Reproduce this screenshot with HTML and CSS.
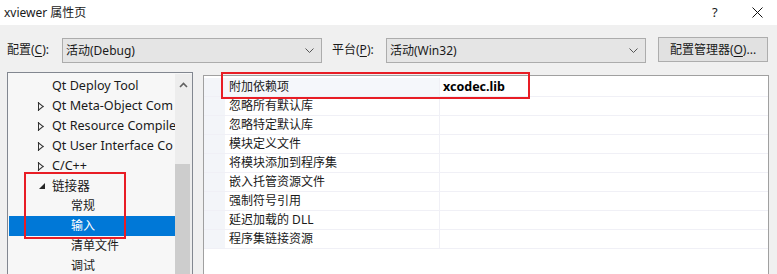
FILE: index.html
```html
<!DOCTYPE html>
<html lang="zh-CN">
<head>
	<meta charset="UTF-8">
	<title>xviewer 属性页</title>
	<link rel="stylesheet" href="styles.css">
</head>
<body>
	<div class="dialog">
		<div class="title-bar">
			<span class="title">xviewer 属性页</span>
			<span class="help">?</span>
			<span class="close">
				<svg width="11" height="11" viewBox="0 0 11 11"><path d="M0.5 0.5 L10.5 10.5 M10.5 0.5 L0.5 10.5" stroke="#111" stroke-width="1" fill="none"/></svg>
			</span>
		</div>

		<div class="toolbar">
			<label class="field-label">配置(<u>C</u>):</label>
			<div class="combo">
				<span>活动(Debug)</span>
				<svg class="chevron" width="9" height="5" viewBox="0 0 9 5"><path d="M0.5 0.5 L4.5 4.5 L8.5 0.5" stroke="#555" fill="none"/></svg>
			</div>
			<label class="field-label platform">平台(<u>P</u>):</label>
			<div class="combo">
				<span>活动(Win32)</span>
				<svg class="chevron" width="9" height="5" viewBox="0 0 9 5"><path d="M0.5 0.5 L4.5 4.5 L8.5 0.5" stroke="#555" fill="none"/></svg>
			</div>
			<button class="config-btn">配置管理器(<u>O</u>)...</button>
		</div>

		<div class="panels">
			<div class="tree">
				<ul class="tree-list">
					<li class="tree-item"><span class="twisty"></span>Qt Deploy Tool</li>
					<li class="tree-item"><span class="twisty closed"></span>Qt Meta-Object Com</li>
					<li class="tree-item"><span class="twisty closed"></span>Qt Resource Compile</li>
					<li class="tree-item"><span class="twisty closed"></span>Qt User Interface Co</li>
					<li class="tree-item"><span class="twisty closed"></span>C/C++</li>
					<li class="tree-item"><span class="twisty open"></span>链接器</li>
					<li class="tree-item child">常规</li>
					<li class="tree-item child selected">输入</li>
					<li class="tree-item child">清单文件</li>
					<li class="tree-item child">调试</li>
				</ul>
				<div class="scrollbar">
					<svg class="scroll-up" width="9" height="6" viewBox="0 0 9 6"><path d="M1 5 L4.5 1.5 L8 5" stroke="#606060" stroke-width="1.6" fill="none"/></svg>
					<div class="thumb"></div>
				</div>
				<div class="mark mark-tree"></div>
			</div>

			<div class="grid">
				<div class="grid-row first">
					<div class="gutter"></div>
					<div class="name">附加依赖项</div>
					<div class="value">xcodec.lib</div>
				</div>
				<div class="grid-row"><div class="gutter"></div><div class="name">忽略所有默认库</div><div class="value"></div></div>
				<div class="grid-row"><div class="gutter"></div><div class="name">忽略特定默认库</div><div class="value"></div></div>
				<div class="grid-row"><div class="gutter"></div><div class="name">模块定义文件</div><div class="value"></div></div>
				<div class="grid-row"><div class="gutter"></div><div class="name">将模块添加到程序集</div><div class="value"></div></div>
				<div class="grid-row"><div class="gutter"></div><div class="name">嵌入托管资源文件</div><div class="value"></div></div>
				<div class="grid-row"><div class="gutter"></div><div class="name">强制符号引用</div><div class="value"></div></div>
				<div class="grid-row"><div class="gutter"></div><div class="name">延迟加载的 DLL</div><div class="value"></div></div>
				<div class="grid-row"><div class="gutter"></div><div class="name">程序集链接资源</div><div class="value"></div></div>
				<div class="mark mark-grid"></div>
			</div>
		</div>
	</div>
</body>
</html>
```

FILE: styles.css
```css
:root {
	--face: #f0f0f0;
	--text: #1a1a1a;
	--frame: #a0a0a0;
	--select: #0078d7;
	--mark: #e81d25;
	--line: #f0f0f6;
}

* {
	box-sizing: border-box;
}

body {
	margin: 0;
	width: 777px;
	height: 274px;
	overflow: hidden;
	font-family: "Noto Sans", "Noto Sans CJK SC", sans-serif;
	font-size: 12px;
	color: var(--text);
	background: var(--face);
}

u {
	text-decoration: underline;
	text-underline-offset: 2px;
}

.dialog {
	height: 274px;
	display: flex;
	flex-direction: column;
	overflow: hidden;
}

/* title bar */
.title-bar {
	flex-shrink: 0;
	height: 25px;
	background: #fff;
	display: flex;
	align-items: center;
	padding-left: 4px;
}

.title {
	flex: 1;
	line-height: 16px;
	padding-top: 1px;
}

.help {
	width: 40px;
	font-size: 13px;
	padding-bottom: 1px;
}

.close {
	width: 25px;
	display: flex;
}

/* toolbar */
.toolbar {
	flex-shrink: 0;
	display: flex;
	align-items: center;
	height: 26px;
	margin-top: 11px;
	padding-left: 7px;
}

.field-label {
	width: 55px;
	line-height: 16px;
	padding-top: 2px;
}

.field-label.platform {
	margin-left: 10px;
	width: 54px;
}

.combo {
	width: 260px;
	height: 25px;
	margin-top: 2px;
	background: #e5e5e5;
	border: 1px solid #acacac;
	display: flex;
	align-items: center;
	justify-content: space-between;
	padding: 0 7px 0 3px;
}

.config-btn {
	margin-left: 12px;
	width: 110px;
	height: 25px;
	background: #e1e1e1;
	border: 1px solid #adadad;
	font-family: inherit;
	font-size: 12px;
	color: var(--text);
	padding: 0;
}

/* panels */
.panels {
	flex-shrink: 0;
	display: flex;
	align-items: flex-start;
	margin-top: 10px;
	padding-left: 7px;
}

.tree {
	position: relative;
	width: 186px;
	height: 202px;
	background: #f7f7f7;
	border: 1px solid #828790;
	border-bottom: none;
	padding: 3px 0 0 1px;
	display: flex;
}

.tree-list {
	list-style: none;
	margin: 0;
	padding: 0;
	width: 166px;
	overflow: hidden;
}

.tree-item {
	height: 20px;
	line-height: 20px;
	padding-left: 43px;
	font-size: 12.6px;
	white-space: nowrap;
	display: flex;
	align-items: center;
	position: relative;
}

.tree-item.child {
	padding-left: 62px;
	font-size: 12px;
}

.tree-item.selected {
	background: var(--select);
	color: #fff;
}

.twisty {
	position: absolute;
	left: 29px;
	top: 6px;
	width: 6px;
	height: 9px;
}

.twisty.closed {
	border-left: 1px solid #333;
}

.twisty.closed::before,
.twisty.closed::after {
	content: "";
	position: absolute;
	left: -1px;
	width: 7px;
	height: 1px;
	background: #333;
}

.twisty.closed::before {
	top: 0;
	transform-origin: left center;
	transform: rotate(38deg);
}

.twisty.closed::after {
	bottom: 0;
	transform-origin: left center;
	transform: rotate(-38deg);
}

.twisty.open {
	top: 7px;
	left: 30px;
	width: 0;
	height: 0;
	border-left: 6px solid transparent;
	border-bottom: 6px solid #262626;
}

.scrollbar {
	width: 17px;
	margin-top: -2px;
	background: #ededed;
	display: flex;
	flex-direction: column;
	align-items: center;
}

.scroll-up {
	margin-top: 8px;
}

.thumb {
	width: 15px;
	margin-top: 76px;
	margin-right: 2px;
	flex: 1;
	background: #cdcdcd;
}

.grid {
	position: relative;
	margin-left: 10px;
	margin-top: 3px;
	width: 566px;
	height: 199px;
	background: #fff;
	border: 1px solid var(--frame);
	border-bottom: none;
	padding-top: 2px;
}

.grid-row {
	display: flex;
	height: 19px;
	border-bottom: 1px solid var(--line);
}

.gutter {
	width: 21px;
	background: #f3f5f9;
}

.name {
	width: 215px;
	padding-left: 4px;
	line-height: 18px;
	border-right: 1px solid var(--line);
}

.grid-row.first .name {
	background: #f5f7fb;
}

.value {
	flex: 1;
	padding-left: 3px;
	line-height: 18px;
	font-weight: bold;
	font-size: 12.5px;
	color: #000;
}

/* red annotation frames drawn over the screenshot */
.mark {
	position: absolute;
	border: 2px solid var(--mark);
}

.mark-tree {
	left: 16px;
	top: 99px;
	width: 102px;
	height: 67px;
}

.mark-grid {
	left: 17px;
	top: -4px;
	width: 309px;
	height: 27px;
}
```
